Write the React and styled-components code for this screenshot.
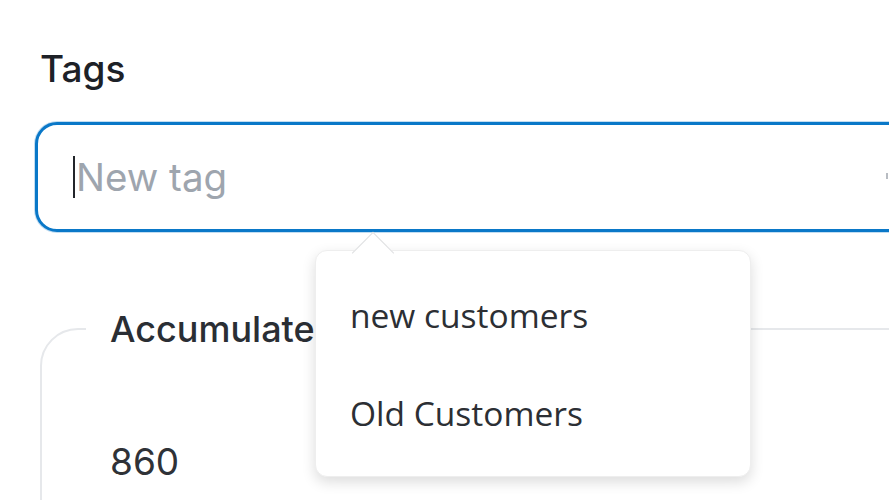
import React from "react";
import styled, { createGlobalStyle } from "styled-components";

const GlobalStyle = createGlobalStyle`
  html, body {
    margin: 0;
    padding: 0;
    background: #ffffff;
    overflow: hidden;
  }
  body {
    font-family: Inter, "Noto Sans", sans-serif;
  }
`;

const Page = styled.div`
  position: relative;
  width: 889px;
  height: 500px;
  overflow: hidden;
  padding: 44px 0 0 35px;
  box-sizing: border-box;
  display: flex;
  flex-direction: column;
  align-items: flex-start;
`;

const Field = styled.div`
  display: flex;
  flex-direction: column;
  gap: 28px;
`;

const Label = styled.label`
  padding-left: 5px;
  font-size: 37px;
  font-weight: 500;
  line-height: 50px;
  color: #1d2127;
`;

const InputBox = styled.div`
  position: relative;
  width: 900px;
  height: 110px;
  box-sizing: border-box;
  border: 3px solid #0a78c8;
  box-shadow: 0 0 0 1px rgba(10, 120, 200, 0.25);
  border-radius: 22px;
  display: flex;
  align-items: center;
  padding-left: 35px;
  background: #fff;
`;

const Caret = styled.span`
  width: 2px;
  height: 42px;
  background: #22252a;
  margin-right: 1px;
`;

const Placeholder = styled.span`
  font-size: 38.5px;
  color: #9ea5ae;
`;

const EndMark = styled.span`
  position: absolute;
  left: 848px;
  top: 48px;
  width: 2px;
  height: 6px;
  background: #b8bcc2;
`;

const Fieldset = styled.fieldset`
  margin: 77px 0 0 5px;
  width: 900px;
  height: 320px;
  flex-shrink: 0;
  box-sizing: border-box;
  border: 2px solid #e6e8eb;
  border-radius: 38px;
  padding: 0 0 0 44px;
`;

const Legend = styled.legend`
  padding: 0 24px;
  font-size: 36px;
  font-weight: 500;
  color: #2a2e34;
  line-height: 40px;
`;

const Value = styled.div`
  margin: 90px 0 0 24px;
  font-size: 37px;
  color: #2f3237;
`;

const Dropdown = styled.div`
  position: absolute;
  left: 315px;
  top: 250px;
  width: 436px;
  height: 227px;
  box-sizing: border-box;
  padding: 15px 0 16px;
  background: #ffffff;
  border-radius: 12px;
  border: 1px solid #eeeeee;
  box-shadow: 0 5px 14px rgba(0, 0, 0, 0.14);
  z-index: 2;
`;

const Arrow = styled.div`
  position: absolute;
  left: 42px;
  top: -13px;
  width: 29px;
  height: 29px;
  background: #ffffff;
  border-top: 1px solid #dedfe1;
  border-left: 1px solid #dedfe1;
  transform: rotate(45deg);
`;

const OptionList = styled.div`
  display: flex;
  flex-direction: column;
`;

const Option = styled.div`
  height: 98px;
  display: flex;
  align-items: center;
  padding-left: 34px;
  font-family: "Open Sans", "Noto Sans", sans-serif;
  font-size: 33.5px;
  color: #2c2f34;
`;

export default function App() {
  return (
    <>
      <GlobalStyle />
      <Page>
        <Field>
          <Label>Tags</Label>
          <InputBox>
            <Caret />
            <Placeholder>New tag</Placeholder>
            <EndMark />
          </InputBox>
        </Field>
        <Fieldset>
          <Legend>Accumulated customers</Legend>
          <Value>860</Value>
        </Fieldset>
        <Dropdown>
          <Arrow />
          <OptionList>
            <Option>new customers</Option>
            <Option>Old Customers</Option>
          </OptionList>
        </Dropdown>
      </Page>
    </>
  );
}
